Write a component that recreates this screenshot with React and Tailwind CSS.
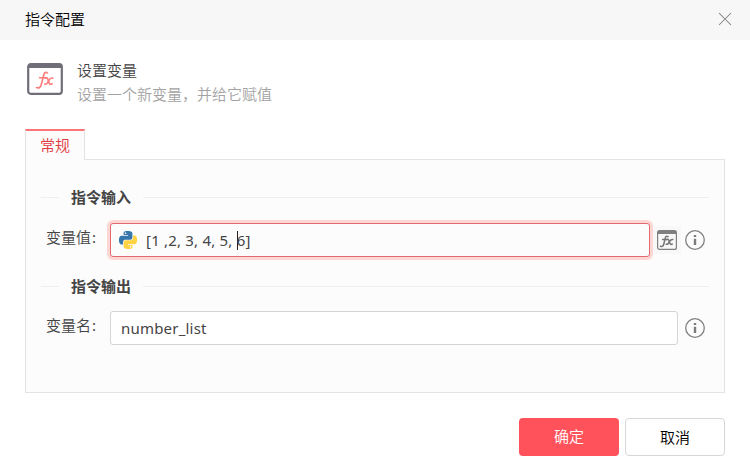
const PY =
  "M14.25.18l.9.2.73.26.59.3.45.32.34.34.25.34.16.33.1.3.04.26.02.2-.01.13V8.5l-.05.63-.13.55-.21.46-.26.38-.3.31-.33.25-.35.19-.35.14-.33.1-.3.07-.26.04-.21.02H8.77l-.69.05-.59.14-.5.22-.41.27-.33.32-.27.35-.2.36-.15.37-.1.35-.07.32-.04.27-.02.21v3.06H3.17l-.21-.03-.28-.07-.32-.12-.35-.18-.36-.26-.36-.36-.35-.46-.32-.59-.28-.73-.21-.88-.14-1.05-.05-1.23.06-1.22.16-1.04.24-.87.32-.71.36-.57.4-.44.42-.33.42-.24.4-.16.36-.1.32-.05.24-.01h.16l.06.01h8.16v-.83H6.18l-.01-2.75-.02-.37.05-.34.11-.31.17-.28.25-.26.31-.23.38-.2.44-.18.51-.15.58-.12.64-.1.71-.06.77-.04.84-.02 1.27.05zm-6.3 1.98l-.23.33-.08.41.08.41.23.34.33.22.41.09.41-.09.33-.22.23-.34.08-.41-.08-.41-.23-.33-.33-.22-.41-.09-.41.09z";

function PythonIcon() {
  return (
    <svg viewBox="0 0 24 24" className="size-[18px] shrink-0">
      <path d={PY} fill="#3776ab" />
      <path d={PY} fill="#ffd343" transform="rotate(180 12 12)" />
    </svg>
  );
}

function CommandIcon() {
  return (
    <svg viewBox="0 0 36 32" fill="none" className="h-8 w-9 shrink-0">
      <rect x="1.200" y="1.200" width="33.600" height="29.600" rx="2.500" fill="#fff" stroke="#706e79" strokeWidth="2.200" />
      <path d="M1 5V3.500Q1 1 3.500 1H32.500Q35 1 35 3.500V5Z" fill="#706e79" />
      <g stroke="#fb7c7c" strokeWidth="1.600" strokeLinecap="round" strokeLinejoin="round">
        <path d="M20.500 10C19 8.800 17.300 9.400 16.700 12L14.300 21.500C13.600 24.300 12 25.600 9.500 24.500" />
        <path d="M12.500 14.800H19" />
        <path d="M18.300 15.300C20.500 14.200 20.800 15.500 21.400 18C22 20.600 22.700 22 25.200 20.800" />
        <path d="M25.800 15.200C23.500 14.200 22.600 16 21.500 18C20.300 20.300 19.300 22 17.700 20.900" />
      </g>
    </svg>
  );
}

function FxIcon() {
  return (
    <svg viewBox="0 0 20 20" fill="none" className="size-5 shrink-0">
      <rect x=".6" y=".6" width="18.800" height="18.800" rx="2" stroke="#808080" strokeWidth="1.200" />
      <path d="M.5 4V2.500Q.5.500 2.500.500H17.500Q19.500.500 19.500 2.500V4Z" fill="#808080" />
      <g stroke="#757575" strokeWidth="1.500" strokeLinecap="round" strokeLinejoin="round">
        <path d="M11 6.700C9.600 5.700 8.500 6.400 8.200 8.200L6.800 14C6.300 16.200 5.200 17 3.400 16.200" />
        <path d="M5.600 9.400H10" />
        <path d="M9.900 9.500C11.700 8.900 11.900 10 12.400 11.700C12.900 13.600 13.400 15 15.300 14.100" />
        <path d="M15.800 9.500C14 8.900 13.200 10.500 12.300 11.800C11.400 13.400 10.600 14.900 9.200 14.100" />
      </g>
    </svg>
  );
}

function InfoIcon() {
  return (
    <svg viewBox="0 0 20 20" fill="none" className="size-5 shrink-0">
      <circle cx="10" cy="10" r="9.300" stroke="#808080" strokeWidth="1.300" />
      <path d="M8.800 5h2.400v2H8.800zM8.800 8.800h2.400v6.200H8.800z" fill="#7c7c7c" />
    </svg>
  );
}

function SectionTitle({ children }) {
  return (
    <div className="flex h-6 items-center gap-3 px-[15px]">
      <span className="h-px w-[18px] bg-[#efefef]" />
      <h2 className="w-[60px] text-[15px] leading-6 font-semibold whitespace-nowrap text-[#444]">{children}</h2>
      <span className="h-px flex-1 bg-[#efefef]" />
    </div>
  );
}

function FieldLabel({ children }) {
  return (
    <label className="mb-[7px] w-16 leading-6">
      {children}
      <span className="ml-px font-normal">:</span>
    </label>
  );
}

export default function App() {
  return (
    <div className="flex h-[476px] w-[750px] flex-col bg-white font-['Noto_Sans','Noto_Sans_CJK_SC',sans-serif] text-[15px] font-[350] text-[#444]">
      <header className="flex h-10 items-center justify-between bg-[#f7f7f7] pr-[18px] pl-[25px]">
        <h1 className="mb-[2px] text-[15px] leading-6 font-[350] text-black">指令配置</h1>
        <svg viewBox="0 0 14 14" className="mb-[2px] size-[14px]" stroke="#808080" strokeWidth="1.050">
          <path d="M1 1L13 13M13 1L1 13" />
        </svg>
      </header>

      <section className="flex h-[89px] items-start gap-[14px] pt-[18px] pl-[27px]">
        <div className="pt-[5px]">
          <CommandIcon />
        </div>
        <div className="leading-6">
          <p>设置变量</p>
          <p className="text-[#a3a3a3]">设置一个新变量，并给它赋值</p>
        </div>
      </section>

      <div className="z-10 mx-[25px] -mb-px flex h-[31px]">
        <button className="w-[60px] border-x border-t-2 border-x-[#e3e3e3] border-t-[#fa7478] bg-[#fcfcfc] pb-px text-[15px] leading-[27px] text-[#e0393f]">
          常规
        </button>
      </div>

      <main className="mx-[25px] h-[234px] border border-[#e3e3e3] bg-[#fcfcfc] pt-[25px]">
        <SectionTitle>指令输入</SectionTitle>
        <div className="mt-[14px] flex h-[34px] items-center pr-[15px] pl-5">
          <FieldLabel>变量值</FieldLabel>
          <div className="flex h-[34px] w-[540px] items-center rounded-[3px] border border-[#e26a6e] bg-[#fcfcfc] pl-2 font-normal ring-3 ring-[#ffd6d6]">
            <PythonIcon />
            <span className="ml-[9px] flex items-center tracking-[0.2px] whitespace-pre">
              <span>[1 ,2, 3, 4, 5, </span>
              <span className="-mr-px h-[19px] w-px bg-[#222]" />
              <span>6]</span>
            </span>
          </div>
          <div className="ml-[3px] flex items-center gap-1">
            <div className="bg-[#f8f8f8] p-1">
              <FxIcon />
            </div>
            <InfoIcon />
          </div>
        </div>

        <div className="mt-[17px]">
          <SectionTitle>指令输出</SectionTitle>
        </div>
        <div className="mt-[13px] flex h-[34px] items-center pr-[15px] pl-5">
          <FieldLabel>变量名</FieldLabel>
          <div className="flex h-[34px] w-[568px] items-center rounded-[3px] border border-[#d5d5d5] bg-white pl-[10px] font-normal tracking-[0.2px]">
            number_list
          </div>
          <div className="ml-[7px]">
            <InfoIcon />
          </div>
        </div>
      </main>

      <footer className="mt-[25px] flex justify-end gap-[6px] pr-[25px]">
        <button className="h-[38px] w-[100px] rounded bg-[#ff525b] pb-px text-[15px] text-white">确定</button>
        <button className="h-[38px] w-[100px] rounded border border-[#d7d7d7] bg-white text-[15px] text-black">取消</button>
      </footer>
    </div>
  );
}
